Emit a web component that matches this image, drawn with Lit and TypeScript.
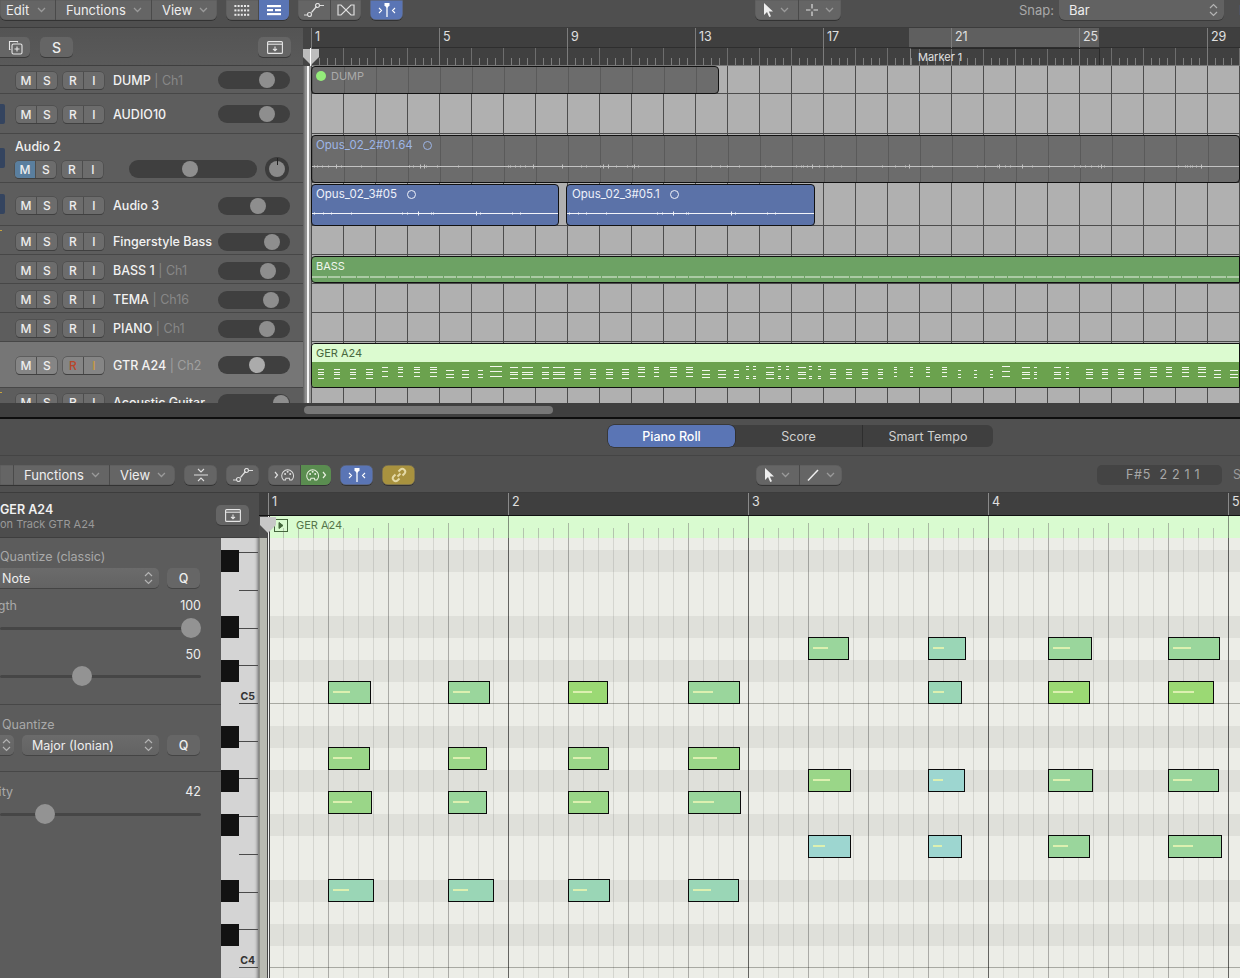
import { LitElement, html, css, svg } from "lit";
import { customElement } from "lit/decorators.js";

const chev = svg`<svg class="chev" width="9" height="6" viewBox="0 0 9 6"><path d="M1 1l3.5 3.5L8 1" fill="none" stroke="#9a9a9a" stroke-width="1.3"/></svg>`;
const updown = html`<svg class="ud" width="9" height="14" viewBox="0 0 9 14"><path d="M1 5l3.5-3.5L8 5M1 9l3.5 3.5L8 9" fill="none" stroke="#b4b4b4" stroke-width="1.2"/></svg>`;
const icoGrid = html`<svg width="16" height="12" viewBox="0 0 16 12" fill="#e8e8e8">${[0,1,2].map(r=>[0,1,2,3,4].map(c=>svg`<rect x="${c*3.2+.4}" y="${r*4.4+1}" width="2" height="2"/>`))}</svg>`;
const icoList = html`<svg width="16" height="12" viewBox="0 0 16 12" fill="#fff"><rect x="1" y="1" width="14" height="2.2"/><rect x="1" y="5" width="6" height="2.2"/><rect x="9" y="5" width="6" height="2.2"/><rect x="1" y="9" width="14" height="2.2"/></svg>`;
const icoCurve = html`<svg width="20" height="14" viewBox="0 0 20 14" fill="none" stroke="#ddd" stroke-width="1.2"><path d="M0 12h3M7.5 9.5l5-6M15.5 2.5H20"/><circle cx="5.5" cy="11.5" r="2"/><circle cx="13.5" cy="2.5" r="2"/></svg>`;
const icoX = html`<svg width="18" height="14" viewBox="0 0 18 14" fill="none" stroke="#ddd" stroke-width="1.2"><path d="M1 2v10h3L14 2h3v10h-3L4 2z"/></svg>`;
const icoCatch = html`<svg width="18" height="14" viewBox="0 0 18 14" fill="none" stroke="#fff" stroke-width="1.1"><path d="M1 5l2.5 2.5L1 10M17 5l-2.5 2.5L17 10"/><path d="M9 4v10" stroke-width="1.3"/><path d="M6.5 0h5v2.5L9 5 6.5 2.5z" fill="#fff" stroke="none"/></svg>`;
const icoArrow = html`<svg width="10" height="14" viewBox="0 0 10 14"><path d="M1 0v12l3-3 2.2 5 1.8-.8L5.8 8.5H10z" fill="#eee"/></svg>`;
const icoCross = html`<svg width="12" height="12" viewBox="0 0 12 12" stroke="#ddd" stroke-width="1.2"><path d="M6 0v4.5M6 7.5V12M0 6h4.5M7.5 6H12"/></svg>`;
const icoPen = html`<svg width="12" height="12" viewBox="0 0 12 12" stroke="#eee" stroke-width="1.5"><path d="M1 11.5L11 1"/></svg>`;
const icoTray = html`<svg width="16" height="13" viewBox="0 0 16 13" fill="none" stroke="#e6e6e6" stroke-width="1.1"><rect x=".6" y=".6" width="14.8" height="11.8" rx="1"/><path d="M1 3.2h14"/><path d="M8 5.5v4M6 7.8l2 2 2-2"/></svg>`;
const icoCopy = html`<svg width="15" height="15" viewBox="0 0 15 15" fill="none" stroke="#e6e6e6" stroke-width="1.1"><path d="M2.5 9.5h-1V1.5h8v1"/><rect x="4" y="4" width="10" height="10" rx="1.5"/><path d="M9 6.5v5M6.5 9h5"/></svg>`;
const icoComp = html`<svg width="16" height="14" viewBox="0 0 16 14" fill="none" stroke="#ddd" stroke-width="1.1"><path d="M1 7h14M5 1l3 3 3-3M5 13l3-3 3 3"/></svg>`;
const midiFace = svg`<path d="M4 14a7 7 0 1 1 10 0h-2.5l-.5-2h-4l-.5 2z"/><circle cx="6" cy="7" r=".6"/><circle cx="9" cy="4.5" r=".6"/><circle cx="12" cy="7" r=".6"/>`;
const icoMidi = (out: boolean, col: string) => html`<svg width="28" height="16" viewBox="0 0 28 16" fill="none" stroke="${col}" stroke-width="1.2">${out ? svg`<path d="M21 5l2.5 3-2.5 3"/><g transform="translate(3,1) scale(.85)">${midiFace}</g>` : svg`<path d="M5 5l2.5 3L5 11"/><g transform="translate(10,1) scale(.85)">${midiFace}</g>`}</svg>`;
const icoLink = html`<svg width="16" height="16" viewBox="0 0 16 16" fill="none" stroke="#e4d9a6" stroke-width="2"><path d="M6.5 9.5l3-3"/><path d="M7.5 4.5l1.8-1.8a2.8 2.8 0 0 1 4 4L11.5 8.5"/><path d="M8.5 11.5l-1.8 1.8a2.8 2.8 0 0 1-4-4L4.5 7.5"/></svg>`;
const icoPlayBox = html`<svg width="14" height="13" viewBox="0 0 14 13" fill="none" stroke="#44663c"><rect x=".5" y=".5" width="13" height="12"/><path d="M5 3.5l4 3-4 3z" fill="#44663c"/></svg>`;

function rng(seed: number) { let s = seed; return () => (s = (s * 9301 + 49297) % 233280) / 233280; }
function wave(width: number, h: number, seed: number, amp: number, dense: number) {
  const r = rng(seed);
  const mid = Math.floor(h / 2) + .5;
  let d = `M0 ${mid}H${width}`;
  for (let x = 2; x < width; x += 2 + r() * 7) {
    const burst = (x % 96) < 32 ? 1 : 0.15;
    if (r() < dense * burst) { const a = r() < .2 ? amp : 1; d += `M${x.toFixed(0)}.5 ${mid - a}V${mid + a}`; }
  }
  return d;
}

interface Track { name: string; ch?: string; h: number; knob: number; tall?: boolean; sel?: boolean; tag?: string; lift?: boolean; }
const tracks: Track[] = [
  { name: "DUMP", ch: "Ch1", h: 28, knob: 267 },
  { name: "AUDIO10", h: 40, knob: 267, tag: "blue" },
  { name: "Audio 2", h: 49, knob: 191, tall: true, tag: "blue" },
  { name: "Audio 3", h: 43, knob: 258, tag: "blue", lift: true },
  { name: "Fingerstyle Bass", h: 29, knob: 272, tag: "yellow", lift: true },
  { name: "BASS 1", ch: "Ch1", h: 29, knob: 268, lift: true },
  { name: "TEMA", ch: "Ch16", h: 29, knob: 271, lift: true },
  { name: "PIANO", ch: "Ch1", h: 29, knob: 267, lift: true },
  { name: "GTR A24", ch: "Ch2", h: 46, knob: 257, sel: true },
  { name: "Acoustic Guitar", h: 29, knob: 281, tag: "yellow" },
];

const bars = [1, 5, 9, 13, 17, 21, 25, 29];
const lanesDark = new Set([550, 616, 660, 726, 770, 814, 880, 924]);
const laneYs: number[] = [];
for (let y = 528; y < 990; y += 22) laneYs.push(y);

type N = [number, number, number, string];
const L = "#9bd974", M = "#9ad688", G = "#9ad69c", T = "#9ad6b6", C = "#9dd6d0";
const notes: Record<number, N[]> = {
  638: [[808, 41, 15, G], [928, 38, 11, T], [1048, 44, 17, G], [1168, 52, 18, G]],
  682: [[328, 43, 17, G], [448, 42, 17, G], [568, 40, 19, L], [688, 52, 20, G], [928, 34, 11, T], [1048, 42, 20, L], [1168, 46, 21, L]],
  748: [[328, 42, 19, M], [448, 39, 17, M], [568, 41, 18, M], [688, 52, 24, M]],
  770: [[808, 43, 17, M], [928, 37, 10, C], [1048, 45, 17, G], [1168, 51, 19, G]],
  792: [[328, 44, 19, M], [448, 39, 16, G], [568, 41, 18, M], [688, 53, 21, G]],
  836: [[808, 43, 12, C], [928, 34, 9, C], [1048, 42, 15, G], [1168, 54, 20, G]],
  880: [[328, 46, 16, T], [448, 46, 15, T], [568, 42, 14, T], [688, 51, 18, T]],
};
const blackKeys = [550, 616, 660, 726, 770, 814, 880, 924];

const A = [7, 10, 12, 16], B = [5, 9, 14], Cc = [5, 7, 10, 14], D = [8, 12, 15], E = [4, 9, 14], F = [5, 10, 12, 16];
const Dots = [4, 7, 14, 16];
type G2 = [number, number, number[]];
const dashGroups: G2[] = [
  [318, 6, A], [334, 6, A], [350, 6, A], [366, 7, A], [382, 6, B], [398, 5, Cc], [414, 6, Cc], [430, 7, Cc],
  [446, 8, D], [462, 7, D], [478, 5, D], [490, 12, E], [510, 8, F], [522, 11, F], [542, 7, F], [553, 12, F],
  [574, 7, A], [590, 6, A], [606, 7, A], [622, 7, A], [638, 7, Cc], [654, 5, Cc], [670, 7, Cc], [686, 7, Cc],
  [702, 8, D], [718, 8, D], [734, 5, D], [746, 3, Dots], [753, 3, Dots], [766, 8, F], [778, 3, Dots], [786, 3, Dots],
  [798, 8, F], [809, 3, Dots], [818, 3, Dots], [830, 6, A], [846, 6, A], [862, 6, A], [878, 5, A],
  [894, 3, Cc], [910, 3, Cc], [926, 4, Cc], [942, 5, Cc], [958, 3, D], [974, 3, D], [990, 3, D], [1002, 8, E],
  [1022, 8, F], [1034, 3, F], [1054, 7, F], [1066, 3, F],
  [1086, 7, A], [1102, 6, A], [1118, 6, A], [1134, 7, A], [1150, 7, Cc], [1166, 6, Cc], [1182, 7, Cc], [1198, 8, Cc],
  [1214, 7, D], [1230, 8, D],
];
const dashes = () => dashGroups.flatMap(([x, w, p]) => p.map((o) => svg`<rect x="${x - 312}" y="${o}" width="${w}" height="1" fill="#f2f7ec"/>`));

@customElement("app-root")
export class AppRoot extends LitElement {
  static styles = css`
    :host { display: block; width: 1240px; height: 978px; overflow: hidden; background: #505050; font-family: Inter, "Liberation Sans", sans-serif; font-size: 12.5px; color: #eee; }
    * { box-sizing: border-box; }
    .toolbar { height: 28px; display: flex; align-items: flex-start; background: #4f4f4f; border-bottom: 1px solid #3c3c3c; }
    .group { display: flex; height: 20px; background: #656565; border-radius: 0 0 6px 6px; box-shadow: 0 1px 0 #333, inset 0 0 0 .5px #5a5a5a; overflow: hidden; flex: none; }
    .group.round { border-radius: 6px; }
    .seg { display: flex; align-items: center; justify-content: center; gap: 7px; border-left: 1px solid #4a4a4a; height: 100%; white-space: nowrap; font-size: 13px; color: #eee; }
    .seg:first-child { border-left: 0; }
    .seg.between { justify-content: space-between; padding: 0 9px 0 10px; }
    .seg.first { padding-left: 6px; }
    .seg.active { background: #5a75b5; }
    .seg.green { background: #5a8d50; }
    .blue { background: #5a75b5; }
    .gold { background: #a8923f; }
    .w0 { width: 13px; } .w1 { width: 55px; } .w2 { width: 96px; } .w3 { width: 66px; } .w32 { width: 32px; } .w31 { width: 31px; } .w33 { width: 33px; }
    .ml9 { margin-left: 9px; }
    .tb-ptr { margin-left: 352px; width: 86px; }
    .tb-ptr .seg { flex: 1; }
    .snap { margin-left: 178px; display: flex; align-items: center; height: 19px; gap: 5px; color: #a9a9a9; font-size: 13px; }
    .snap-sel { width: 165px; height: 20px; background: #626262; border-radius: 0 0 6px 6px; display: flex; align-items: center; justify-content: space-between; padding: 0 6px 0 10px; color: #eee; box-shadow: 0 1px 0 #3a3a3a; }
    .drag { margin-left: 10px; color: #999; white-space: nowrap; }

    .arrange { display: grid; grid-template-columns: 303px 8px 1fr; height: 391px; overflow: hidden; position: relative; }
    .list { grid-column: 1; height: 375px; overflow: hidden; }
    .list-head { height: 38px; display: flex; align-items: center; background: linear-gradient(#545454,#5a5a5a); border-bottom: 1px solid #3f3f3f; padding-top: 1px; }
    .btn { height: 20px; background: #656565; border-radius: 5px; box-shadow: 0 1px 0 #3a3a3a; display: flex; align-items: center; justify-content: center; flex: none; color: #eee; }
    .btn-copy { width: 30px; margin-left: 0; border-radius: 0 5px 5px 0; }
    .btn-s { width: 33px; margin-left: 10px; font-size: 14px; font-weight: 500; }
    .btn-tray { width: 33px; margin-left: auto; margin-right: 12px; }
    .track { display: flex; align-items: center; padding: 1px 0 0 16px; background: #5d5d5d; border-bottom: 1px solid #474747; position: relative; white-space: nowrap; }
    .track.lift { padding-top: 3px; }
    .track.sel { background: #767676; }
    .track.tall { flex-direction: column; align-items: stretch; justify-content: flex-start; gap: 3px; padding: 5px 0 0 15px; }
    .tall-row { display: flex; align-items: center; }
    .ms { display: flex; height: 17px; width: 41px; background: #6c6c6c; border-radius: 4px; box-shadow: 0 0 0 .5px #444, 0 1px 0 #3c3c3c; overflow: hidden; flex: none; font-size: 12px; font-weight: 500; color: #eee; }
    .sel .ms { background: #858585; }
    .ms span { flex: 1; display: flex; align-items: center; justify-content: center; border-left: 1px solid #4d4d4d; }
    .ms span:first-child { border-left: 0; }
    .ms .m-on { background: #5a7f9f; }
    .ms .rec { color: #b8452a; } .ms .inp { color: #c99a40; }
    .ms2 { margin-left: 6px; }
    .name { margin-left: 9px; font-size: 12.5px; font-weight: 500; color: #f2f2f2; }
    .name-solo { font-size: 12.5px; font-weight: 500; color: #f2f2f2; line-height: 15px; }
    .chn { color: #888; font-weight: 400; }
    .sel .chn { color: #a0a0a0; }
    .slider { position: relative; height: 18px; width: 72px; background: #3f3f3f; border-radius: 9px; flex: none; }
    .track > .slider { position: absolute; left: 218px; }
    .slider.wide { width: 128px; margin-left: 26px; }
    .knob { position: absolute; top: 1px; width: 16px; height: 16px; border-radius: 50%; background: #8e8e8e; }
    .sel .knob { background: #ababab; }
    .pan { margin-left: 8px; width: 24px; height: 24px; border-radius: 50%; background: #3c3c3c; display: flex; align-items: center; justify-content: center; position: relative; flex: none; }
    .pan i { width: 16px; height: 16px; border-radius: 50%; background: #8a8a8a; position: relative; }
    .pan i::after { content: ""; position: absolute; left: 7.5px; top: -3px; width: 1px; height: 7px; background: #222; }
    .tag { position: absolute; left: 0; width: 5px; height: 20px; top: calc(50% - 10px); background: #34445f; border-radius: 0 2px 2px 0; }
    .tag-yellow { position: absolute; left: 0; top: 4px; width: 2px; height: 1px; background: #c9a53c; }
    .gutter { grid-column: 2; height: 375px; margin-top: 0; background: linear-gradient(to right, #5d5d5d, #8d8d8d 30%, #9a9a9a); }
    .gutter .gh { height: 38px; background: #444; }
    .time { grid-column: 3; height: 375px; overflow: hidden; position: relative; }
    .rul1 { height: 20px; background: #3f3f3f; border-bottom: 1px solid #2e2e2e; display: flex; position: relative; }
    .rul2 { height: 18px; background-color: #404040; border-bottom: 1px solid #777;
      background-image: linear-gradient(to right,#6e6e6e 1px,transparent 1px), linear-gradient(to right,#7d7d7d 1px,transparent 1px);
      background-size: 32px 100%, 8px 7px; background-position: 0 0, 0 100%; background-repeat: repeat-x; }
    .cells { position: absolute; left: 0; top: 0; display: flex; height: 38px; z-index: 2; }
    .cell { width: 128px; flex: none; border-left: 1px solid #7c7c7c; padding: 1px 0 0 3px; font-size: 12.5px; color: #e0e0e0; }
    .cycle { position: absolute; left: 598px; width: 190px; top: 0; height: 19px; background: #5f5f5f; }
    .marker { position: absolute; left: 599px; top: 20px; width: 190px; height: 17px; border-left: 1px solid #8a8a8a; border-right: 1px solid #2a2a2a; border-top: 1px solid #2a2a2a; font-size: 11px; padding: 1px 0 0 7px; color: #e0e0e0; z-index: 3; white-space: nowrap; }
    .lanes { background-color: #b0b0b0; background-image: linear-gradient(to right,#4c4c4c 1px,transparent 1px); background-size: 32px 100%; }
    .lane { position: relative; border-bottom: 1px solid #4c4c4c; }
    .region { position: absolute; left: 0; border: 1px solid #111; border-radius: 4px; overflow: hidden; font-size: 11px; white-space: nowrap; z-index: 1; }
    .r-gray { background-color: #6c6c6c; background-image: linear-gradient(to right,#5a5a5a 1px,transparent 1px); background-size: 32px 100%; color: #aaa; }
    .r-blue { background: #5b72a8; color: #eef1fa; }
    .r-green { background: #6da264; color: #f1f6ee; }
    .r-label { position: absolute; left: 4px; top: 2px; display: flex; align-items: center; }
    .opus { font-size: 11.5px; }
    .dot { width: 10px; height: 10px; border-radius: 50%; background: #94ec7a; margin: 0 5px 0 0; }
    .ring { display: inline-block; width: 9px; height: 9px; border: 1px solid currentColor; border-radius: 50%; margin-left: 10px; }
    .wv { position: absolute; left: 0; display: block; }
    .gtr-top { height: 18px; background: #dcfbd0; color: #49683f; font-size: 11px; padding: 2px 0 0 4px; }
    .gtr-bot { height: 26px; background: #6ba24e; position: relative; }
    .playhead { position: absolute; top: 38px; bottom: 16px; width: 2px; background: #f4f4f4; z-index: 5; }
    .head { position: absolute; top: 20px; z-index: 6; }
    .scroll { position: absolute; left: 0; right: 0; top: 375px; height: 14px; background: #3f3f3f; }
    .thumb { position: absolute; left: 304px; top: 3px; width: 249px; height: 8px; border-radius: 4px; background: #777; }
    .rule { position: absolute; left: 0; right: 0; top: 389px; height: 2px; background: #0e0e0e; }

    .tabs { height: 37px; display: flex; align-items: center; justify-content: flex-start; background: #505050; border-bottom: 1px solid #444; padding: 0 0 2px 608px; }
    .tabset { width: 385px; height: 22px; background: #3f3f3f; border-radius: 6px; display: flex; font-size: 12.5px; color: #cfcfcf; }
    .tab { display: flex; align-items: center; justify-content: center; position: relative; }
    .tab.on { width: 127px; background: #5a75b5; border-radius: 6px; color: #fff; font-weight: 500; box-shadow: 0 0 0 .5px #222; }
    .tab.score { width: 128px; border-right: 1px solid #2e2e2e; }
    .tab.smart { flex: 1; }
    .tb2 { height: 37px; display: flex; align-items: center; background: #505050; padding-top: 1px; border-bottom: 1px solid #3c3c3c; }
    .tb2 .group { border-radius: 0 6px 6px 0; height: 20px; }
    .tb2 .round { border-radius: 6px; }
    .ptr2 { margin-left: 341px; width: 86px; }
    .ptr2 .seg { flex: 1; }
    .lcd { margin-left: 255px; width: 125px; height: 20px; background: #444; border-radius: 5px; display: flex; align-items: center; padding-left: 29px; color: #a8a8a8; font-size: 12.5px; letter-spacing: .7px; white-space: pre; flex: none; }
    .s-cut { margin-left: 11px; color: #999; }

    .roll { display: grid; grid-template-columns: 259px 1fr; height: 485px; }
    .side { display: flex; flex-direction: column; overflow: hidden; }
    .side-head { height: 45px; flex: none; background: #4d4d4d; border-bottom: 1px solid #3e3e3e; display: flex; align-items: center; position: relative; padding-top: 3px; }
    .side-head .tt { font-weight: 600; font-size: 12.5px; color: #f0f0f0; line-height: 15px; }
    .side-head .st { font-size: 11px; color: #999; line-height: 15px; }
    .side-head .btn { position: absolute; left: 216px; top: 12px; width: 33px; height: 20px; }
    .side-body { flex: 1; display: flex; }
    .insp { width: 221px; flex: none; background: #5c5c5c; display: flex; flex-direction: column; overflow: hidden; }
    .sec { border-bottom: 1px solid #474747; padding-right: 20px; flex: none; }
    .sec.s1 { height: 167px; }
    .sec.s2 { height: 67px; }
    .sec.s3 { height: 100px; border: 0; }
    .lab { color: #a9a9a9; font-size: 12.5px; white-space: nowrap; }
    .lab.t1 { padding-top: 11px; height: 30px; }
    .lab.t2 { padding: 12px 0 0 2px; height: 30px; }
    .row { display: flex; align-items: center; height: 20px; }
    .row.vals { height: 17px; justify-content: space-between; }
    .row.vals.end { justify-content: flex-end; }
    .mt9 { margin-top: 9px; } .mt11 { margin-top: 11px; } .mt16 { margin-top: 16px; } .mt13 { margin-top: 13px; } .mt12 { margin-top: 12px; }
    .sel2 { height: 20px; background: linear-gradient(#6b6b6b,#636363); border-radius: 5px; box-shadow: 0 1px 0 #444; display: flex; align-items: center; justify-content: space-between; padding: 0 6px 0 10px; flex: none; font-size: 12.5px; color: #eee; white-space: nowrap; }
    .sel2.note-sel { width: 159px; border-radius: 0 5px 5px 0; padding-left: 2px; }
    .sel2.stub { width: 14px; padding: 0 3px 0 0; border-radius: 0 5px 5px 0; justify-content: flex-end; }
    .sel2.major { width: 137px; margin-left: 8px; }
    .q { width: 33px; height: 20px; margin-left: 8px; background: #666; border-radius: 5px; box-shadow: 0 1px 0 #444; display: flex; align-items: center; justify-content: center; font-weight: 500; flex: none; }
    .cut { overflow: hidden; display: flex; justify-content: flex-end; white-space: nowrap; flex: none; }
    .cut17 { width: 17px; } .cut13 { width: 13px; }
    .val { color: #eee; font-size: 12.5px; }
    .track-h { position: relative; height: 3px; background: #464646; border-radius: 2px; }
    .thumb-k { position: absolute; top: -9px; width: 20px; height: 20px; margin-left: -10px; border-radius: 50%; background: #939393; }
    .keys { width: 38px; flex: none; position: relative; background: #d4d4d4; border-right: 1px solid #8a8a8a; overflow: hidden; box-shadow: inset -3px 0 3px -2px #888; }
    .wk { border-bottom: 1px solid #4a4a4a; margin-left: 18px; position: relative; }
    .bk { position: absolute; left: 0; width: 18px; height: 22px; background: #121212; }
    .cn { position: absolute; right: 3px; font-size: 10.5px; font-weight: 700; color: #333; }

    .main { position: relative; overflow: hidden; }
    .main-rul { height: 23px; display: flex; background: #3f3f3f; padding-left: 9px; border-bottom: 1px solid #111; }
    .bar { width: 240px; flex: none; border-left: 1px solid #8a8a8a; padding: 1px 0 0 3px; font-size: 12.5px; color: #e0e0e0; }
    .strip { height: 22px; margin-left: 9px; padding-top: 3px; background-color: #d9fbd0; position: relative; display: flex; align-items: flex-start; color: #55754a; font-size: 11px; line-height: 13px;
      background-image: linear-gradient(to right,#7f8f7a 1px,transparent 1px), linear-gradient(to right,#a8b8a2 1px,transparent 1px), linear-gradient(to right,#b4c4ae 1px,transparent 1px);
      background-size: 240px 100%, 60px 15px, 15px 10px; background-position: 0 0, 0 100%, 0 100%; background-repeat: repeat-x; }
    .strip .play { margin-left: 6px; display: flex; }
    .strip .t { margin-left: 8px; }
    .gutter2 { position: absolute; left: 0; top: 45px; bottom: 0; width: 9px; background: #b9bab2; z-index: 3; border-left: 1px solid #8d8e88; }
    .grid { position: relative; overflow: hidden; height: 440px; }
    .grid-in { margin-top: -10px; }
    .laneP { height: 22px; position: relative; background: #ecede7; }
    .laneP.dark { background: #dfe0da; }
    .laneP.c { box-shadow: inset 0 -1px 0 #a8a9a2; }
    .vlines { position: absolute; left: 9px; right: 0; top: 45px; bottom: 0; z-index: 1;
      background-image: linear-gradient(to right,rgba(0,0,0,.42) 1px,transparent 1px), linear-gradient(to right,rgba(0,0,0,.2) 1px,transparent 1px), linear-gradient(to right,rgba(0,0,0,.1) 1px,transparent 1px);
      background-size: 240px 100%, 60px 100%, 15px 100%; }
    .note { position: absolute; top: -1px; height: 23px; border: 1px solid #0a0a0a; z-index: 2; }
    .note i { position: absolute; left: 4px; top: 9px; height: 2px; background: #dcf0b0; }
    .ph2 { position: absolute; left: 8px; top: 23px; bottom: 0; width: 3px; background: #f4f4f4; border-left: 1px solid #444; border-right: 1px solid #444; z-index: 5; }
    .head2 { position: absolute; left: 0; top: 23px; z-index: 6; }
    .pos-head { left: 302px; }
    .pos-ph { left: 307px; }
    .region.top1 { top: 1px; }
    .region.top0 { top: 0; }
    .square-r { border-radius: 4px 0 0 4px; }
    .opus-col { color: #9db5e6; }
    .l5 { left: 5px; }
  `;

  private ms(t: Track) {
    const on = t.name === "Audio 2";
    return html`<div class="ms"><span class="${on ? "m-on" : ""}">M</span><span>S</span></div>
      <div class="ms ms2"><span class="${t.sel ? "rec" : ""}">R</span><span class="${t.sel ? "inp" : ""}">I</span></div>`;
  }

  private trackRow(t: Track) {
    const tag = t.tag === "blue" ? html`<div class="tag"></div>` : t.tag === "yellow" ? html`<div class="tag-yellow"></div>` : "";
    if (t.tall) {
      return html`<div class="track tall" style="height:${t.h}px">${tag}
        <div class="name-solo">${t.name}</div>
        <div class="tall-row">${this.ms(t)}
          <div class="slider wide"><div class="knob" style="left:${t.knob - 130 - 8}px"></div></div>
          <div class="pan"><i></i></div>
        </div>
      </div>`;
    }
    return html`<div class="track ${t.sel ? "sel" : ""} ${t.lift ? "lift" : ""}" style="height:${t.h}px">${tag}
      ${this.ms(t)}
      <div class="name">${t.name}${t.ch ? html`<span class="chn"> | ${t.ch}</span>` : ""}</div>
      <div class="slider"><div class="knob" style="left:${t.knob - 218 - 8}px"></div></div>
    </div>`;
  }

  private timelineLanes() {
    return html`<div class="lanes">
      <div class="lane" style="height:28px">
        <div class="region r-gray top0" style="width:408px;height:28px"><div class="r-label"><span class="dot"></span>DUMP</div></div>
      </div>
      <div class="lane" style="height:40px"></div>
      <div class="lane" style="height:49px">
        <div class="region r-gray top1" style="width:929px;height:48px">
          <div class="r-label opus opus-col"><span>Opus_02_2#01.64</span><span class="ring"></span></div>
          <svg class="wv" style="top:26px" width="929" height="9"><path d="${wave(929, 9, 7, 2, .9)}" stroke="#c2c2c2" fill="none"/></svg>
        </div>
      </div>
      <div class="lane" style="height:43px">
        <div class="region r-blue top1" style="width:248px;height:42px">
          <div class="r-label opus"><span>Opus_02_3#05</span><span class="ring"></span></div>
          <svg class="wv" style="top:24px" width="248" height="9"><path d="${wave(248, 9, 3, 2, .6)}" stroke="#f2f4fa" fill="none"/></svg>
        </div>
        <div class="region r-blue top1" style="left:255px;width:249px;height:42px">
          <div class="r-label opus l5"><span>Opus_02_3#05.1</span><span class="ring"></span></div>
          <svg class="wv" style="top:24px" width="248" height="9"><path d="${wave(248, 9, 3, 2, .6)}" stroke="#f2f4fa" fill="none"/></svg>
        </div>
      </div>
      <div class="lane" style="height:29px"></div>
      <div class="lane" style="height:29px">
        <div class="region r-green top1 square-r" style="width:929px;height:27px">
          <div class="r-label">BASS</div>
          <svg class="wv" style="top:19px" width="929" height="2"><path d="M0 1H929" stroke="#eaf2e4" stroke-dasharray="15 1 12 1" fill="none"/></svg>
        </div>
      </div>
      <div class="lane" style="height:29px"></div>
      <div class="lane" style="height:29px"></div>
      <div class="lane" style="height:46px">
        <div class="region top1 square-r" style="width:929px;height:45px">
          <div class="gtr-top">GER A24</div>
          <div class="gtr-bot"><svg width="929" height="26" style="display:block">${dashes()}</svg></div>
        </div>
      </div>
      <div class="lane" style="height:40px"></div>
    </div>`;
  }

  private inspector() {
    return html`<div class="insp">
      <div class="sec s1">
        <div class="lab t1">Quantize (classic)</div>
        <div class="row"><div class="sel2 note-sel">Note${updown}</div><div class="q">Q</div></div>
        <div class="row vals mt9"><div class="lab cut cut17">Strength</div><div class="val">100</div></div>
        <div class="track-h mt13"><div class="thumb-k" style="left:191px"></div></div>
        <div class="row vals end mt16"><div class="val">50</div></div>
        <div class="track-h mt12"><div class="thumb-k" style="left:82px"></div></div>
      </div>
      <div class="sec s2">
        <div class="lab t2">Quantize</div>
        <div class="row"><div class="sel2 stub">${updown}</div>
          <div class="sel2 major">Major (Ionian)${updown}</div><div class="q">Q</div></div>
      </div>
      <div class="sec s3">
        <div class="row vals mt11"><div class="lab cut cut13">Velocity</div><div class="val">42</div></div>
        <div class="track-h mt13"><div class="thumb-k" style="left:45px"></div></div>
      </div>
    </div>`;
  }

  private keys() {
    const h = 264 / 7;
    const whites = [15.2];
    for (let i = 0; i < 11; i++) whites.push(h);
    return html`<div class="keys">
      ${whites.map((w) => html`<div class="wk" style="height:${w}px"></div>`)}
      ${blackKeys.map((y) => html`<div class="bk" style="top:${y - 538}px"></div>`)}
      <div class="cn" style="top:${690 - 538}px">C5</div>
      <div class="cn" style="top:${954 - 538}px">C4</div>
    </div>`;
  }

  render() {
    return html`
      <div class="toolbar">
        <div class="group"><div class="seg between first w1">Edit${chev}</div><div class="seg between w2">Functions${chev}</div><div class="seg between w3">View${chev}</div></div>
        <div class="group ml9"><div class="seg w32">${icoGrid}</div><div class="seg w31 active">${icoList}</div></div>
        <div class="group ml9"><div class="seg w32">${icoCurve}</div><div class="seg w31">${icoX}</div></div>
        <div class="group ml9 blue w33"><div class="seg w33">${icoCatch}</div></div>
        <div class="group tb-ptr"><div class="seg">${icoArrow}${chev}</div><div class="seg">${icoCross}${chev}</div></div>
        <div class="snap"><span>Snap:</span><div class="snap-sel">Bar${updown}</div><span class="drag">Drag</span></div>
      </div>
      <div class="arrange">
        <div class="list">
          <div class="list-head">
            <div class="btn btn-copy">${icoCopy}</div><div class="btn btn-s">S</div><div class="btn btn-tray">${icoTray}</div>
          </div>
          ${tracks.map((t) => this.trackRow(t))}
        </div>
        <div class="gutter"><div class="gh"></div></div>
        <div class="time">
          <div class="rul1"><div class="cycle"></div></div>
          <div class="rul2"></div>
          <div class="cells">${bars.map((b) => html`<div class="cell">${b}</div>`)}</div>
          <div class="marker">Marker 1</div>
          ${this.timelineLanes()}
        </div>
        <div class="playhead pos-ph"></div>
        <svg class="head pos-head" width="18" height="18" viewBox="0 0 18 18"><path d="M1 1h16v8l-8 8-8-8z" fill="#bdbdbd"/><path d="M8.5 0v18" stroke="#fff"/></svg>
        <div class="scroll"><div class="thumb"></div></div>
        <div class="rule"></div>
      </div>
      <div class="tabs">
        <div class="tabset"><div class="tab on">Piano Roll</div><div class="tab score">Score</div><div class="tab smart">Smart Tempo</div></div>
      </div>
      <div class="tb2">
        <div class="group"><div class="seg w0"></div><div class="seg between w2">Functions${chev}</div><div class="seg between w3">View${chev}</div></div>
        <div class="group round ml9 w33"><div class="seg w33">${icoComp}</div></div>
        <div class="group round ml9 w33"><div class="seg w33">${icoCurve}</div></div>
        <div class="group round ml9"><div class="seg w32">${icoMidi(false, "#ddd")}</div><div class="seg w31 green">${icoMidi(true, "#e8f0e0")}</div></div>
        <div class="group round ml9 blue w33"><div class="seg w33">${icoCatch}</div></div>
        <div class="group round ml9 gold w33"><div class="seg w33">${icoLink}</div></div>
        <div class="group round ptr2"><div class="seg">${icoArrow}${chev}</div><div class="seg">${icoPen}${chev}</div></div>
        <div class="lcd">F#5  2 2 1 1</div>
        <div class="s-cut">S</div>
      </div>
      <div class="roll">
        <div class="side">
          <div class="side-head">
            <div><div class="tt">GER A24</div><div class="st">on Track GTR A24</div></div>
            <div class="btn">${icoTray}</div>
          </div>
          <div class="side-body">${this.inspector()}${this.keys()}</div>
        </div>
        <div class="main">
          <div class="main-rul">${[1, 2, 3, 4, 5].map((b) => html`<div class="bar">${b}</div>`)}</div>
          <div class="strip"><span class="play">${icoPlayBox}</span><span class="t">GER A24</span></div>
          <div class="grid">
            <div class="grid-in">
              ${laneYs.map((y) => html`<div class="laneP ${lanesDark.has(y) ? "dark" : ""} ${y === 682 || y === 946 ? "c" : ""}">
                ${(notes[y] ?? []).map((n) => html`<div class="note" style="left:${n[0] - 259}px;width:${n[1]}px;background:${n[3]}"><i style="width:${n[2]}px"></i></div>`)}
              </div>`)}
            </div>
          </div>
          <div class="vlines"></div>
          <div class="gutter2"></div>
          <div class="ph2"></div>
          <svg class="head2" width="18" height="18" viewBox="0 0 18 18"><path d="M1 1h16v8l-8 8-8-8z" fill="#c8c8c8"/></svg>
        </div>
      </div>
    `;
  }
}
